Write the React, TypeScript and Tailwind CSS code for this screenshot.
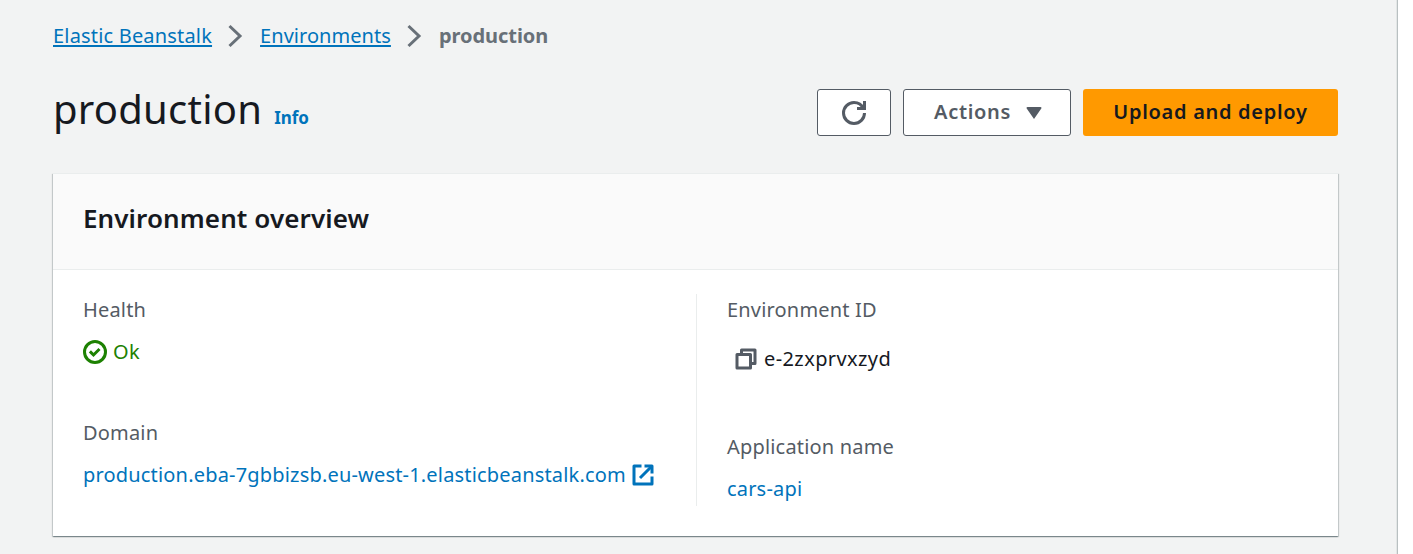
import type { ReactNode } from "react";

function Chevron() {
  return (
    <svg className="mx-[15px] h-6 w-[18px] shrink-0" viewBox="0 0 18 24" fill="none" stroke="#687078" strokeWidth="3">
      <path d="M2.5 2 L13 12 L2.5 22" />
    </svg>
  );
}

function RefreshIcon() {
  return (
    <svg className="size-6" viewBox="0 0 16 16" fill="none" stroke="#545b64" strokeWidth="2">
      <path d="M15 8c0 3.87-3.13 7-7 7s-7-3.13-7-7 3.13-7 7-7c2.79 0 5.2 1.63 6.33 4" />
      <path d="M10 5h5V0" />
    </svg>
  );
}

function OkIcon() {
  return (
    <svg className="size-6" viewBox="0 0 16 16" fill="none" stroke="#1d8102" strokeWidth="2">
      <circle cx="8" cy="8" r="7" />
      <path d="m4.6 7.6 2.4 2.4 4-4" />
    </svg>
  );
}

function CopyIcon() {
  return (
    <svg className="size-6" viewBox="0 0 16 16" fill="none" stroke="#545b64" strokeWidth="2" strokeLinejoin="round">
      <path d="M2 5h9v9H2z" />
      <path d="M5 5V2h9v9h-3" />
    </svg>
  );
}

function ExternalIcon() {
  return (
    <svg className="size-6" viewBox="0 0 16 16" fill="none" stroke="#0073bb" strokeWidth="2" strokeLinejoin="round">
      <path d="M14 9v5H2V2h5" />
      <path d="M9 2h5v5" />
      <path d="M6 10 14 2" />
    </svg>
  );
}

function Field({ label, children }: { label: string; children: ReactNode }) {
  return (
    <div>
      <div className="text-[#545b64]">{label}</div>
      {children}
    </div>
  );
}

export default function App() {
  return (
    <div className="h-[554px] overflow-hidden bg-white font-['Noto_Sans',sans-serif] text-[20px] leading-[30px] tracking-[0.18px] text-[#16191f]">
      <main className="h-full w-[1398px] border-r border-[#b9c0c1] bg-[#f2f3f3] pt-[21px] pr-[59px] pl-[53px] shadow-[inset_-1px_0_0_#e3e6e6]">
        <nav className="flex h-[30px] items-center">
          <a className="text-[#0073bb] underline decoration-2 underline-offset-[2px]">Elastic Beanstalk</a>
          <Chevron />
          <a className="tracking-[0.05px] text-[#0073bb] underline decoration-2 underline-offset-[2px]">Environments</a>
          <Chevron />
          <span className="font-bold tracking-[-0.05px] text-[#687078]">production</span>
        </nav>

        <header className="mt-7 flex items-start justify-between">
          <div className="flex items-baseline">
            <h1 className="text-[40px] leading-[60px] tracking-[0.25px]">production</h1>
            <a className="ml-3 text-[17px] font-bold tracking-[-0.1px] text-[#0073bb]">Info</a>
          </div>
          <div className="mt-[10px] flex gap-3 font-semibold tracking-[0.7px]">
            <button className="flex h-[47px] w-[74px] items-center justify-center rounded-[3px] border border-[#545b64] bg-white">
              <RefreshIcon />
            </button>
            <button className="flex h-[47px] w-[168px] items-center rounded-[3px] border border-[#545b64] bg-white pr-[28px] pb-[2px] pl-[30px] text-[#545b64]">
              Actions
              <svg className="mt-[3px] ml-auto h-3 w-4" viewBox="0 0 16 12" fill="#545b64">
                <path d="M1.5 0h13a1 1 0 0 1 .8 1.6L8 12 .7 1.6A1 1 0 0 1 1.5 0z" />
              </svg>
            </button>
            <button className="h-[47px] w-[255px] rounded-[3px] bg-[#ff9900] pb-[2px]">Upload and deploy</button>
          </div>
        </header>

        <section className="mt-[34px] h-[363px] w-[1285px] border-t border-[#eaeded] bg-white shadow-[0_1px_1px_0_rgba(0,28,36,0.3),1px_1px_1px_0_rgba(0,28,36,0.15),-1px_1px_1px_0_rgba(0,28,36,0.15)]">
          <h2 className="h-24 border-b border-[#eaeded] bg-[#fafafa] px-[30px] pt-[25px] text-[26px] leading-[39px] font-semibold tracking-[0.1px]">
            Environment overview
          </h2>
          <div className="flex pt-6 pl-[30px]">
            <div className="flex h-[212px] w-[614px] flex-col gap-[51px] border-r border-[#eaeded] pt-px">
              <Field label="Health">
                <div className="mt-3 flex items-center gap-[6px] text-[#1d8102]">
                  <OkIcon />
                  <span className="tracking-[0.4px]">Ok</span>
                </div>
              </Field>
              <Field label="Domain">
                <a className="mt-3 flex items-center gap-[5px] text-[#0073bb]">
                  production.eba-7gbbizsb.eu-west-1.elasticbeanstalk.com
                  <ExternalIcon />
                </a>
              </Field>
            </div>
            <div className="flex flex-col gap-[58px] pt-px pl-[30px]">
              <Field label="Environment ID">
                <div className="mt-[19px] flex items-center gap-[6px] pl-[7px] tracking-[0.4px]">
                  <CopyIcon />
                  e-2zxprvxzyd
                </div>
              </Field>
              <Field label="Application name">
                <a className="mt-3 block text-[#0073bb]">cars-api</a>
              </Field>
            </div>
          </div>
        </section>
      </main>
    </div>
  );
}
